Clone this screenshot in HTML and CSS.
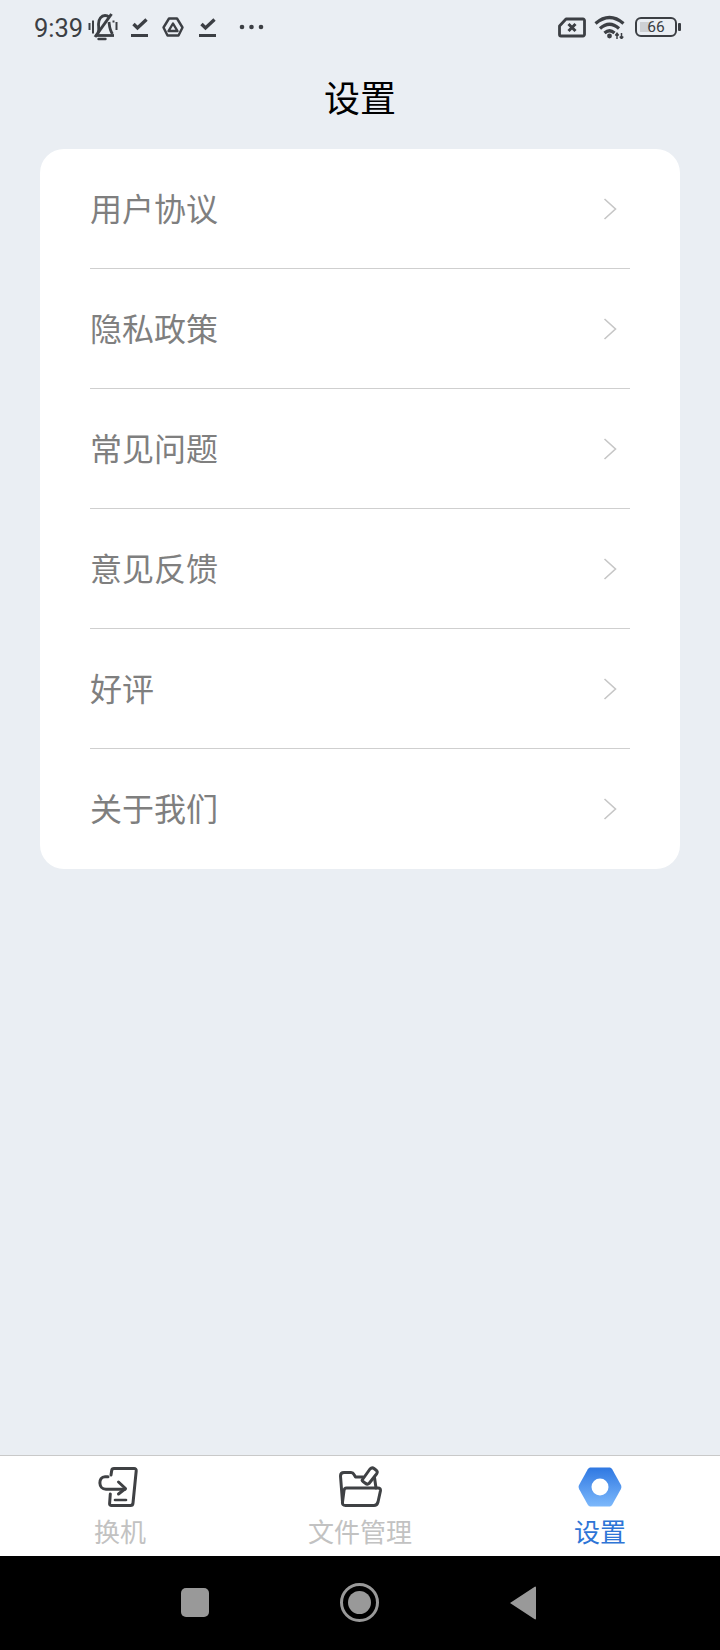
FILE: index.html
```html
<!DOCTYPE html>
<html lang="zh-CN">
<head>
    <meta charset="UTF-8">
    <meta name="viewport" content="width=device-width, initial-scale=1.0">
    <title>设置</title>
    <link rel="stylesheet" href="styles.css">
</head>
<body>
    <div class="status-bar">
        <div class="status-left">
            <span class="time">9:39</span>
            <svg width="30" height="28" viewBox="0 0 30 28" fill="none" stroke="#3c3f44" stroke-width="2.800">
                <path d="M10 20c1.500-3 .5-6 .5-9 0-5 3-8.500 6.500-8.500 1.500 0 3 .5 4 1.500"/>
                <path d="M21 9c.5 4 .5 8 3.500 12"/>
                <path d="M7.500 22.500H26"/>
                <path d="M10.500 26h7" stroke-linecap="round" stroke-width="2.400"/>
                <path d="M7 24 23.500 1" stroke-width="3"/>
                <path d="M1.500 10v7M5 7.500v13M25.500 7.500v2M28.500 9v8" stroke-width="2"/>
            </svg>
            <svg class="ic-check" width="18" height="20" viewBox="0 0 18 20" fill="none" stroke="#3c3f44">
                <path d="M2.500 7 6.500 11 15.500 2.500" stroke-width="3.400"/>
                <path d="M0 18.500h17" stroke-width="3"/>
            </svg>
            <svg class="ic-drive" width="22" height="20" viewBox="0 0 22 20" fill="none" stroke="#3c3f44" stroke-width="2.400" stroke-linejoin="round">
                <path d="M7 1.500h8L20.500 10.500 16.500 18.500H5.500L1.500 10.500z"/>
                <path d="M11 6.500 15.500 14H6.500z"/>
            </svg>
            <svg class="ic-check ic-check2" width="18" height="20" viewBox="0 0 18 20" fill="none" stroke="#3c3f44">
                <path d="M2.500 7 6.500 11 15.500 2.500" stroke-width="3.400"/>
                <path d="M0 18.500h17" stroke-width="3"/>
            </svg>
            <svg class="ic-dots" width="25" height="6" viewBox="0 0 25 6" fill="#3c3f44">
                <circle cx="3" cy="3" r="2.300"/>
                <circle cx="12.500" cy="3" r="2.300"/>
                <circle cx="22" cy="3" r="2.300"/>
            </svg>
        </div>
        <div class="status-right">
            <svg width="28" height="21" viewBox="0 0 28 21" fill="none" stroke="#3c3f44" stroke-width="2.800" stroke-linejoin="round">
                <path d="M8 2h17a1.500 1.500 0 0 1 1.500 1.500v14a1.500 1.500 0 0 1-1.500 1.500H3a1.500 1.500 0 0 1-1.500-1.500V9z"/>
                <path d="M10.500 7 17.500 14M17.500 7 10.500 14" stroke-width="3"/>
            </svg>
            <svg class="ic-wifi" width="31" height="24" viewBox="0 0 31 24" fill="none" stroke="#3c3f44" stroke-width="3.200">
                <path d="M1.500 8.500Q15.500-3.500 29.500 8.500"/>
                <path d="M6 13.500Q15.500 5 25 13.500"/>
                <path d="M10.500 18Q15.500 13.500 20.500 18"/>
                <circle cx="15.500" cy="21" r="2.400" fill="#3c3f44" stroke="none"/>
                <path d="M23 24v-5.500M21.300 20.500l1.700-2.200 1.700 2.200M27.500 18v5.500M25.800 21.500l1.700 2.200 1.700-2.200" stroke-width="1.500"/>
            </svg>
            <div class="battery">
                <div class="battery-body">
                    <span class="battery-fill"></span>
                    <span class="battery-num">66</span>
                </div>
                <span class="battery-tip"></span>
            </div>
        </div>
    </div>

    <h1 class="page-title">设置</h1>

    <div class="settings-card">
        <div class="settings-row"><span>用户协议</span><svg class="chevron" width="14" height="22" viewBox="0 0 14 22"><path d="M1.500 1 12.500 11 1.500 21"/></svg></div>
        <div class="settings-row"><span>隐私政策</span><svg class="chevron" width="14" height="22" viewBox="0 0 14 22"><path d="M1.500 1 12.500 11 1.500 21"/></svg></div>
        <div class="settings-row"><span>常见问题</span><svg class="chevron" width="14" height="22" viewBox="0 0 14 22"><path d="M1.500 1 12.500 11 1.500 21"/></svg></div>
        <div class="settings-row"><span>意见反馈</span><svg class="chevron" width="14" height="22" viewBox="0 0 14 22"><path d="M1.500 1 12.500 11 1.500 21"/></svg></div>
        <div class="settings-row"><span>好评</span><svg class="chevron" width="14" height="22" viewBox="0 0 14 22"><path d="M1.500 1 12.500 11 1.500 21"/></svg></div>
        <div class="settings-row"><span>关于我们</span><svg class="chevron" width="14" height="22" viewBox="0 0 14 22"><path d="M1.500 1 12.500 11 1.500 21"/></svg></div>
    </div>

    <div class="tab-bar">
        <div class="tab-item">
            <svg width="44" height="42" viewBox="0 0 44 42" fill="none" stroke="#3f4144" stroke-width="3" stroke-linecap="round" stroke-linejoin="round">
                <path d="M13 9 13.700 4.500Q14 2.500 16 2.500H36Q38.500 2.500 38.200 5L35 37Q34.800 39.500 32.500 39.500H13.500Q11.500 39.500 11.600 37.500L12.300 28"/>
                <path d="M10 10.700H7C0 10.700 0 23.300 8 23.300H27"/>
                <path d="M20.500 16 27.500 22.500 20.500 28"/>
                <path d="M17 34h11" stroke-width="2.600"/>
            </svg>
            <span>换机</span>
        </div>
        <div class="tab-item">
            <svg width="44" height="42" viewBox="0 0 44 42" fill="none" stroke="#3f4144" stroke-width="3" stroke-linecap="round" stroke-linejoin="round">
                <path d="M4.500 36 2.500 10Q2.500 6.500 6 6.500H13Q15 6.500 16 8.500L17.500 11H25"/>
                <path d="M8.500 22H40Q42.800 22 42.400 25L40 36Q39 39.500 36 39.500H7.500Q4 39.500 4.500 36L6 24.500Q6.300 22 8.500 22z"/>
                <path d="M24.500 13.500 32 3Q34 1 36 2.500L38.500 4.500Q40 6 38.500 8L31 17.500Q29.500 19 27 17L25 15.500Q23.500 14.500 24.500 13.500z"/>
                <path d="M36.500 11.500 38 22"/>
            </svg>
            <span>文件管理</span>
        </div>
        <div class="tab-item tab-active">
            <svg width="44" height="42" viewBox="0 0 44 42">
                <defs>
                    <linearGradient id="gearFill" x1="0" y1="0" x2="0" y2="1">
                        <stop offset="0" stop-color="#2f78e2"/>
                        <stop offset="1" stop-color="#7cb8fb"/>
                    </linearGradient>
                </defs>
                <path fill="url(#gearFill)" d="M13 1.500h18c1.500 0 2.500.6 3.200 1.800l8.600 15.500c.8 1.500.8 2.900 0 4.400L34.200 38.700c-.7 1.200-1.700 1.800-3.200 1.800H13c-1.500 0-2.500-.6-3.200-1.800L1.200 23.200c-.8-1.500-.8-2.900 0-4.400L9.800 3.300C10.500 2.100 11.500 1.500 13 1.500z"/>
                <circle cx="22" cy="21" r="8.500" fill="#fff"/>
            </svg>
            <span>设置</span>
        </div>
    </div>

    <div class="nav-bar">
        <span class="nav-square"></span>
        <span class="nav-circle"><span class="nav-dot"></span></span>
        <svg class="nav-back" width="28" height="34" viewBox="0 0 28 34"><path d="M27 1.500V32.500a1 1 0 0 1-1.600.6L1 17 25.400 1a1 1 0 0 1 1.600.5z" fill="#999"/></svg>
    </div>
</body>
</html>
```

FILE: styles.css
```css
* {
    box-sizing: border-box;
}
body {
    margin: 0;
    width: 720px;
    height: 1650px;
    display: flex;
    flex-direction: column;
    background-color: #eaeef3;
    font-family: "Noto Sans CJK SC", "Noto Sans", sans-serif;
    overflow: hidden;
}

/* status bar */
.status-bar {
    height: 54px;
    padding: 0 39px 0 34px;
    display: flex;
    justify-content: space-between;
    align-items: center;
}
.status-left,
.status-right {
    display: flex;
    align-items: center;
}
.time {
    font-family: Roboto, sans-serif;
    font-size: 25.5px;
    line-height: 30px;
    padding-top: 2px;
    color: #3c3f44;
    width: 54px;
}
.ic-check {
    margin-left: 13px;
}
.ic-drive {
    margin-left: 13px;
}
.ic-check2 {
    margin-left: 15px;
}
.ic-dots {
    margin-left: 22px;
}
.ic-wifi {
    margin-left: 8px;
}
.battery {
    margin-left: 10px;
    display: flex;
    align-items: center;
}
.battery-body {
    position: relative;
    width: 42px;
    height: 20px;
    border: 2px solid #3c3f44;
    border-radius: 6px;
    display: flex;
    align-items: center;
    justify-content: center;
}
.battery-fill {
    position: absolute;
    left: 3px;
    top: 3px;
    bottom: 3px;
    width: 10px;
    background-color: #cdd0d4;
}
.battery-num {
    position: relative;
    font-family: Roboto, sans-serif;
    font-size: 15.5px;
    line-height: 17px;
    color: #3c3f44;
}
.battery-tip {
    margin-left: 1px;
    width: 3px;
    height: 8px;
    border-radius: 1px;
    background-color: #3c3f44;
}

.page-title {
    margin: 0;
    height: 95px;
    padding-top: 16px;
    text-align: center;
    font-size: 36px;
    font-weight: 400;
    line-height: 52px;
    color: #000;
}

/* settings list */
.settings-card {
    margin: 0 40px;
    padding: 0 50px;
    height: 720px;
    background-color: #fff;
    border-radius: 24px;
}
.settings-row {
    height: 120px;
    padding-right: 13px;
    display: flex;
    justify-content: space-between;
    align-items: center;
    border-bottom: 1px solid #cfcfcf;
    font-size: 32px;
    color: #7f7f7f;
}
.settings-row span {
    margin-bottom: 4px;
}
.settings-row:last-child {
    border-bottom: none;
}
.chevron {
    fill: none;
    stroke: #c6c6c6;
    stroke-width: 1.6;
}

/* bottom tabs */
.tab-bar {
    margin-top: auto;
    height: 101px;
    border-top: 1px solid #c9c9c9;
    background-color: #fff;
    display: grid;
    grid-template-columns: repeat(3, 1fr);
}
.tab-item {
    padding-top: 10px;
    display: flex;
    flex-direction: column;
    align-items: center;
    font-size: 26px;
    line-height: 36px;
    color: #c2c2c2;
}
.tab-item span {
    margin-top: 5px;
}
.tab-active {
    color: #2e75d6;
}

/* android nav */
.nav-bar {
    position: relative;
    height: 94px;
    background-color: #000;
}
.nav-square,
.nav-circle,
.nav-back {
    position: absolute;
}
.nav-square {
    left: 181px;
    top: 32px;
    width: 28px;
    height: 29px;
    border-radius: 5px;
    background-color: #999;
}
.nav-circle {
    left: 340px;
    top: 27px;
    width: 39px;
    height: 39px;
    border: 3px solid #999;
    border-radius: 50%;
    display: flex;
    align-items: center;
    justify-content: center;
}
.nav-dot {
    width: 23px;
    height: 23px;
    border-radius: 50%;
    background-color: #999;
}
.nav-back {
    left: 509px;
    top: 30px;
}
```
